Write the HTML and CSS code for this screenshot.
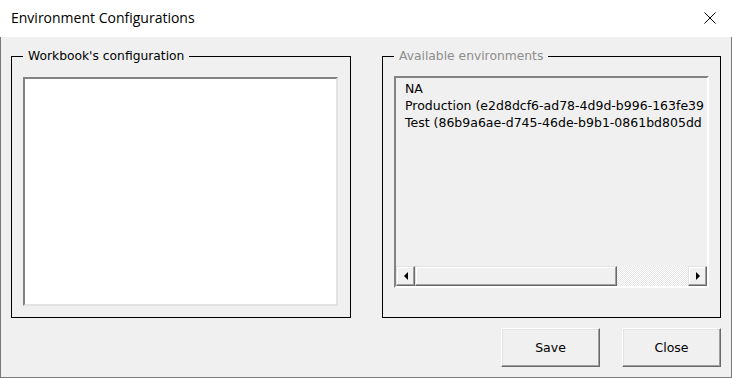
FILE: index.html
```html
<!DOCTYPE html>
<html lang="en">
<head>
    <meta charset="UTF-8">
    <meta name="viewport" content="width=device-width, initial-scale=1.0">
    <title>Environment Configurations</title>
    <link rel="stylesheet" href="styles.css">
</head>
<body>
    <div class="window">
        <div class="titlebar">
            <span class="title">Environment Configurations</span>
            <svg class="close-x" width="12" height="12" viewBox="0 0 12 12">
                <path d="M0.5 0.5 L11.5 11.5 M11.5 0.5 L0.5 11.5" stroke="#000" stroke-width="1" fill="none"/>
            </svg>
        </div>
        <div class="content">
            <div class="frames">
                <fieldset class="frame">
                    <legend>Workbook's configuration</legend>
                    <div class="textbox"></div>
                </fieldset>
                <fieldset class="frame">
                    <legend class="disabled">Available environments</legend>
                    <div class="listbox">
                        <div class="items">
                            <div class="item">NA</div>
                            <div class="item">Production (e2d8dcf6-ad78-4d9d-b996-163fe39</div>
                            <div class="item">Test (86b9a6ae-d745-46de-b9b1-0861bd805dd</div>
                        </div>
                        <div class="hscroll">
                            <div class="sb-btn"><span class="arrow-left"></span></div>
                            <div class="sb-thumb"></div>
                            <div class="sb-track"></div>
                            <div class="sb-btn"><span class="arrow-right"></span></div>
                        </div>
                    </div>
                </fieldset>
            </div>
            <div class="actions">
                <button>Save</button>
                <button>Close</button>
            </div>
        </div>
    </div>
</body>
</html>
```

FILE: styles.css
```css
body {
    margin: 0;
    width: 732px;
    height: 378px;
    overflow: hidden;
    background: #fff;
    font-family: "DejaVu Sans", sans-serif;
}
.window {
    height: 378px;
    display: flex;
    flex-direction: column;
}
.titlebar {
    height: 37px;
    background: #fff;
    display: flex;
    align-items: center;
    padding: 0 16px 0 11px;
    box-sizing: border-box;
}
.title {
    flex: 1;
    font-family: "Open Sans", sans-serif;
    font-size: 14px;
    color: #000;
    margin-top: -2px;
}
.close-x {
    display: block;
    margin-top: -1px;
}
.content {
    flex: 1;
    background: #f0f0f0;
    border: 1px solid #7a7a7a;
    border-top: none;
    padding: 11px 10px 10px 10px;
    display: flex;
    flex-direction: column;
}
.frames {
    display: grid;
    grid-template-columns: 340px 339px;
    column-gap: 31px;
}
.frame {
    margin: 0;
    padding: 0 0 11px 11px;
    border: 1px solid #000;
    height: 270px;
    box-sizing: border-box;
    min-width: 0;
}
.frame legend {
    margin-left: 0;
    padding: 0 5px;
    font-size: 12.3px;
    line-height: 16px;
    color: #000;
}
.frame legend.disabled {
    color: #8d8d8d;
}
.textbox {
    margin-top: 13px;
    width: 315px;
    height: 229px;
    box-sizing: border-box;
    background: #fff;
    border: 2px solid;
    border-color: #828282 #e3e3e3 #e3e3e3 #828282;
}
.listbox {
    margin-top: 12px;
    width: 315px;
    height: 212px;
    box-sizing: border-box;
    border: 2px solid;
    border-color: #828282 #fff #fff #828282;
    display: flex;
    flex-direction: column;
}
.items {
    flex: 1;
    padding: 2px 0 0 9px;
    overflow: hidden;
}
.item {
    font-size: 12.5px;
    line-height: 17px;
    white-space: nowrap;
    color: #000;
}
.hscroll {
    height: 20px;
    display: flex;
}
.sb-btn {
    width: 19px;
    box-sizing: border-box;
    background: #f0f0f0;
    border: 1px solid;
    border-color: #e3e3e3 #696969 #696969 #e3e3e3;
    box-shadow: inset -1px -1px 0 #a0a0a0, inset 1px 1px 0 #fff;
    display: flex;
    align-items: center;
    justify-content: center;
}
.arrow-left {
    width: 0;
    height: 0;
    border-top: 4px solid transparent;
    border-bottom: 4px solid transparent;
    border-right: 4px solid #000;
}
.arrow-right {
    width: 0;
    height: 0;
    border-top: 4px solid transparent;
    border-bottom: 4px solid transparent;
    border-left: 4px solid #000;
}
.sb-thumb {
    width: 202px;
    box-sizing: border-box;
    background: #f0f0f0;
    border: 1px solid;
    border-color: #e3e3e3 #696969 #696969 #e3e3e3;
    box-shadow: inset -1px -1px 0 #a0a0a0, inset 1px 1px 0 #fff;
}
.sb-track {
    flex: 1;
    background: repeating-conic-gradient(#ffffff 0 25%, #e6e6e6 0 50%) 0 0 / 2px 2px;
}
.actions {
    margin-top: 10px;
    display: flex;
    justify-content: flex-end;
    gap: 22px;
}
button {
    width: 99px;
    height: 39px;
    font-family: "DejaVu Sans", sans-serif;
    font-size: 12.5px;
    color: #000;
    background: #f0f0f0;
    border: 1px solid;
    border-color: #fff #696969 #696969 #fff;
    box-shadow: inset -1px -1px 0 #a0a0a0, inset 1px 1px 0 #e3e3e3;
    padding: 0;
}
```
